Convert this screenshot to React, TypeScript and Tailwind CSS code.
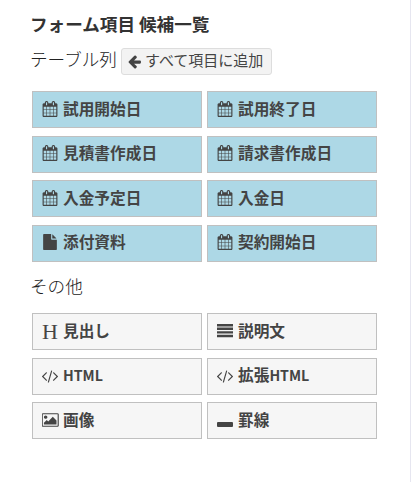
import type { ReactNode } from "react";

const FONT = "font-['Noto_Sans_CJK_JP',sans-serif]";

function Glyph({ w = 1792, d, className = "" }: { w?: number; d: string; className?: string }) {
  return (
    <svg viewBox={`0 0 ${w} 1792`} className={`block h-4 shrink-0 fill-current ${className}`} aria-hidden="true">
      <path d={d} />
    </svg>
  );
}

const CALENDAR =
  "M192 1664h288v-288h-288v288zm352 0h320v-288h-320v288zm-352-352h288v-320h-288v320zm352 0h320v-320h-320v320zm-352-384h288v-288h-288v288zm736 736h320v-288h-320v288zm-384-736h320v-288h-320v288zm768 736h288v-288h-288v288zm-384-352h320v-320h-320v320zm-352-864v-288q0-13-9.5-22.5t-22.5-9.5h-64q-13 0-22.5 9.5t-9.5 22.5v288q0 13 9.5 22.5t22.5 9.5h64q13 0 22.5-9.5t9.5-22.5zm736 864h288v-320h-288v320zm-384-384h320v-288h-320v288zm384 0h288v-288h-288v288zm32-480v-288q0-13-9.5-22.5t-22.5-9.5h-64q-13 0-22.5 9.5t-9.5 22.5v288q0 13 9.5 22.5t22.5 9.5h64q13 0 22.5-9.5t9.5-22.5zm384-64v1280q0 52-38 90t-90 38h-1408q-52 0-90-38t-38-90v-1280q0-52 38-90t90-38h128v-96q0-66 47-113t113-47h64q66 0 113 47t47 113v96h384v-96q0-66 47-113t113-47h64q66 0 113 47t47 113v96h128q52 0 90 38t38 90z";
const CODE =
  "M681 1399l-50 50q-10 10-23 10t-23-10l-466-466q-10-10-10-23t10-23l466-466q10-10 23-10t23 10l50 50q10 10 10 23t-10 23l-393 393 393 393q10 10 10 23t-10 23zm591-1067l-373 1291q-4 13-15.5 19.5t-23.5 2.5l-62-17q-13-4-19.5-15.5t-2.5-24.5l373-1291q4-13 15.5-19.5t23.5-2.5l62 17q13 4 19.5 15.5t2.5 24.5zm657 651l-466 466q-10 10-23 10t-23-10l-50-50q-10-10-10-23t10-23l393-393-393-393q-10-10-10-23t10-23l50-50q10-10 23-10t23 10l466 466q10 10 10 23t-10 23z";
const FILE =
  "M1152 512v-472q22 14 36 28l408 408q14 14 28 36h-472zm-128 32q0 40 28 68t68 28h544v1056q0 40-28 68t-68 28h-1344q-40 0-68-28t-28-68v-1600q0-40 28-68t68-28h800v544z";
const PICTURE =
  "M576 576q0 80-56 136t-136 56-136-56-56-136 56-136 136-56 136 56 56 136zm1024 384v448h-1408v-192l320-320 160 160 512-512zm96-704h-1600q-13 0-22.5 9.5t-9.5 22.5v1216q0 13 9.5 22.5t22.5 9.5h1600q13 0 22.5-9.5t9.5-22.5v-1216q0-13-9.5-22.5t-22.5-9.5zm160 32v1216q0 66-47 113t-113 47h-1600q-66 0-113-47t-47-113v-1216q0-66 47-113t113-47h1600q66 0 113 47t47 113z";
const ARROW =
  "M1664 896v128q0 53-32.5 90.5t-84.5 37.5h-704l293 294q38 36 38 90t-38 90l-75 76q-37 37-90 37-52 0-91-37l-651-652q-37-37-37-90 0-52 37-91l651-650q38-38 91-38 52 0 90 38l75 74q38 38 38 91t-38 91l-293 293h704q52 0 84.5 37.5t32.5 90.5z";

const calendar = <Glyph d={CALENDAR} className="w-4" />;
const code = <Glyph w={2048} d={CODE} className="w-[18px]" />;

const columns: [ReactNode, string][] = [
  [calendar, "試用開始日"],
  [calendar, "試用終了日"],
  [calendar, "見積書作成日"],
  [calendar, "請求書作成日"],
  [calendar, "入金予定日"],
  [calendar, "入金日"],
  [<Glyph d={FILE} className="w-4" />, "添付資料"],
  [calendar, "契約開始日"],
];

const others: [ReactNode, string][] = [
  [<span className="mt-0.5 font-['Liberation_Serif',serif] text-[22px] font-normal leading-4">H</span>, "見出し"],
  [
    <svg viewBox="0 0 16 14" className="block h-3.5 w-4 fill-current" aria-hidden="true">
      <path d="M0 0h16v2.4H0zM0 3.6h16v2.4H0zM0 7.2h16v2.4H0zM0 10.8h16v2.4H0z" />
    </svg>,
    "説明文",
  ],
  [code, "HTML"],
  [code, "拡張HTML"],
  [<Glyph w={1856} d={PICTURE} className="w-[17px]" />, "画像"],
  [<span className="mt-2 block h-[5px] w-4 rounded-[1px] bg-current" />, "罫線"],
];

function Label({ text }: { text: string }) {
  const kanji = text.replace("HTML", "");
  return (
    <span className={`ml-1 whitespace-nowrap text-[15.7px] font-bold leading-6 ${kanji !== text ? "pb-0.5" : ""}`}>
      {kanji}
      {kanji !== text && <span className="text-[14.2px]">HTML</span>}
    </span>
  );
}

function ItemGrid({ items, tone }: { items: [ReactNode, string][]; tone: string }) {
  return (
    <div className="ml-0.5 grid grid-cols-[170px_170px] gap-x-[5px] gap-y-[7.5px]">
      {items.map(([icon, label]) => (
        <div key={label} className={`flex h-[37px] items-center border border-[#c0c0c0] pl-2 ${tone}`}>
          <span className="flex h-[18px] w-[18px] shrink-0 items-center justify-center">{icon}</span>
          <Label text={label} />
        </div>
      ))}
    </div>
  );
}

export default function App() {
  return (
    <main className={`h-[482px] w-[411px] overflow-hidden border-r border-[#e6e6f0] bg-white pl-[30px] pt-3 text-[#444] ${FONT}`}>
      <h1 className="h-6 whitespace-nowrap text-[17.6px] font-bold leading-6 text-[#333]">フォーム項目 候補一覧</h1>
      <div className="mt-3 flex h-[27px] items-center">
        <h2 className="w-[91px] whitespace-nowrap pb-[5px] text-[17.6px] font-light leading-6 text-[#222]">テーブル列</h2>
        <button className="flex h-[27px] w-[151px] items-center whitespace-nowrap rounded-[3px] border border-[#ddd] bg-[#f3f3f3] pl-[5px] text-[15px] leading-6">
          <Glyph d={ARROW} className="mr-[3px] h-[15px] w-[15px]" />
          <span className="pb-[3px]">すべて項目に追加</span>
        </button>
      </div>
      <div className="mt-4">
        <ItemGrid items={columns} tone="bg-[#add8e6] pb-0.5" />
      </div>
      <h2 className="mt-3 h-6 text-[17.6px] font-light leading-6 text-[#222]">その他</h2>
      <div className="mt-[15.5px]">
        <ItemGrid items={others} tone="bg-[#f6f6f6] pb-px" />
      </div>
    </main>
  );
}
